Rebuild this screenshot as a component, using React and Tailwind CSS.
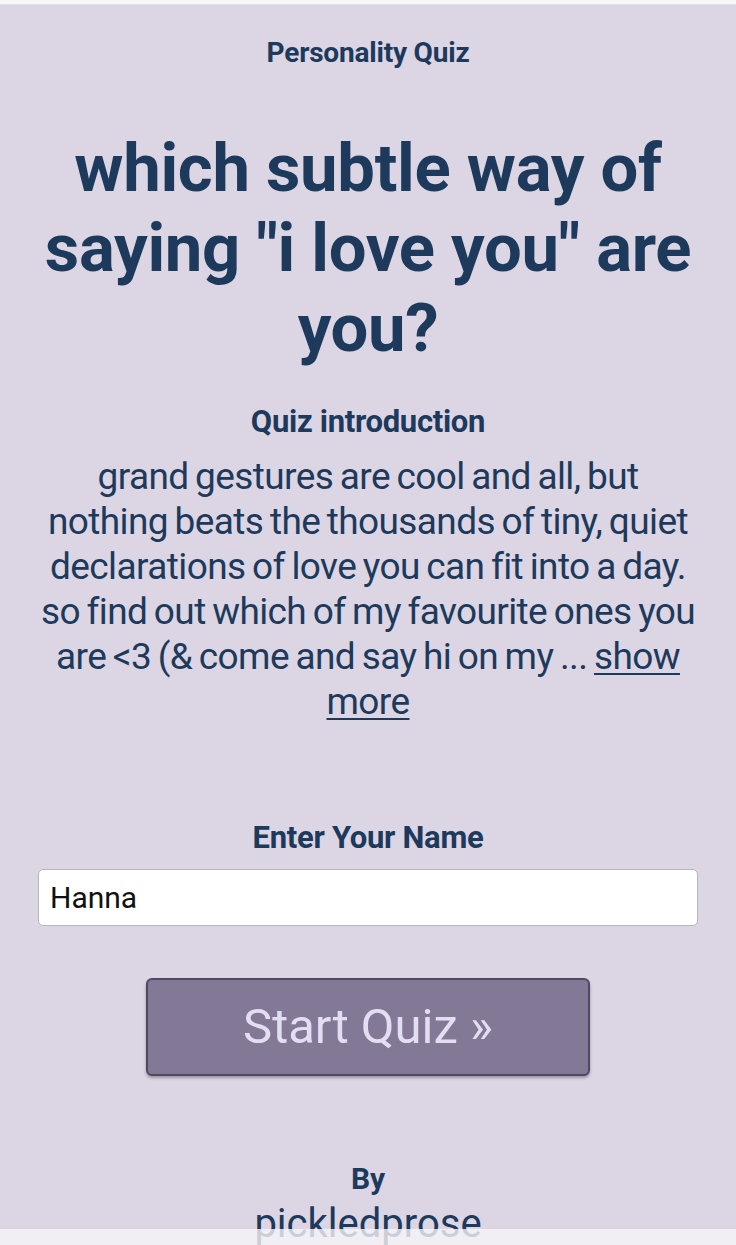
import React from 'react';

const font = { fontFamily: 'Roboto, "Noto Sans", sans-serif' };

const App = () => {
  return (
    <div className="relative min-h-[1245px] bg-[#dcd5e3] text-[#1d3a5c]" style={font}>
      <div className="h-[5px] bg-[#f7f6f8] border-b border-[#e4e1e8]"></div>
      <main className="flex flex-col items-center px-[38px] text-center">
        <p className="mt-[32px] text-[28px] font-bold leading-[32px] tracking-[-0.2px]">Personality Quiz</p>
        <h1 className="mt-[59px] text-[67px] font-bold leading-[80px] tracking-[-0.3px]">
          which subtle way of saying "i love you" are you?
        </h1>
        <h2 className="mt-[34px] text-[31px] font-bold leading-[40px] tracking-[-0.3px]">Quiz introduction</h2>
        <p className="mt-[12px] text-[37px] leading-[45px] tracking-[-0.6px] [word-spacing:-2px]">
          grand gestures are cool and all, but nothing beats the thousands of tiny, quiet declarations of love you can
          fit into a day. so find out which of my favourite ones you are &lt;3 (&amp; come and say hi on my ...{' '}
          <a href="#" className="underline underline-offset-[4px] decoration-[2px]">show more</a>
        </p>
        <label className="mt-[94px] text-[31px] font-bold leading-[40px] tracking-[-0.3px]">Enter Your Name</label>
        <input
          defaultValue="Hanna"
          className="mt-[11px] block h-[57px] w-full rounded-[5px] border border-[#b9b5bf] bg-white px-[11px] text-[30px] text-[#111]"
          style={font}
        />
        <button className="mt-[52px] h-[98px] w-[444px] rounded-[6px] border-2 border-[#4f4860] bg-[#837896] text-[49px] text-[#e3def2] shadow-[0_2px_3px_rgba(0,0,0,0.3)]">
          Start Quiz »
        </button>
        <p className="mt-[87px] text-[30px] font-bold leading-[32px]">By</p>
        <p className="mt-[6px] text-[40px] leading-[46px]">pickledprose</p>
      </main>
      <div className="fixed bottom-0 left-0 right-0 h-[16px] bg-[#f6f4f8]/80"></div>
    </div>
  );
};

export default App;
